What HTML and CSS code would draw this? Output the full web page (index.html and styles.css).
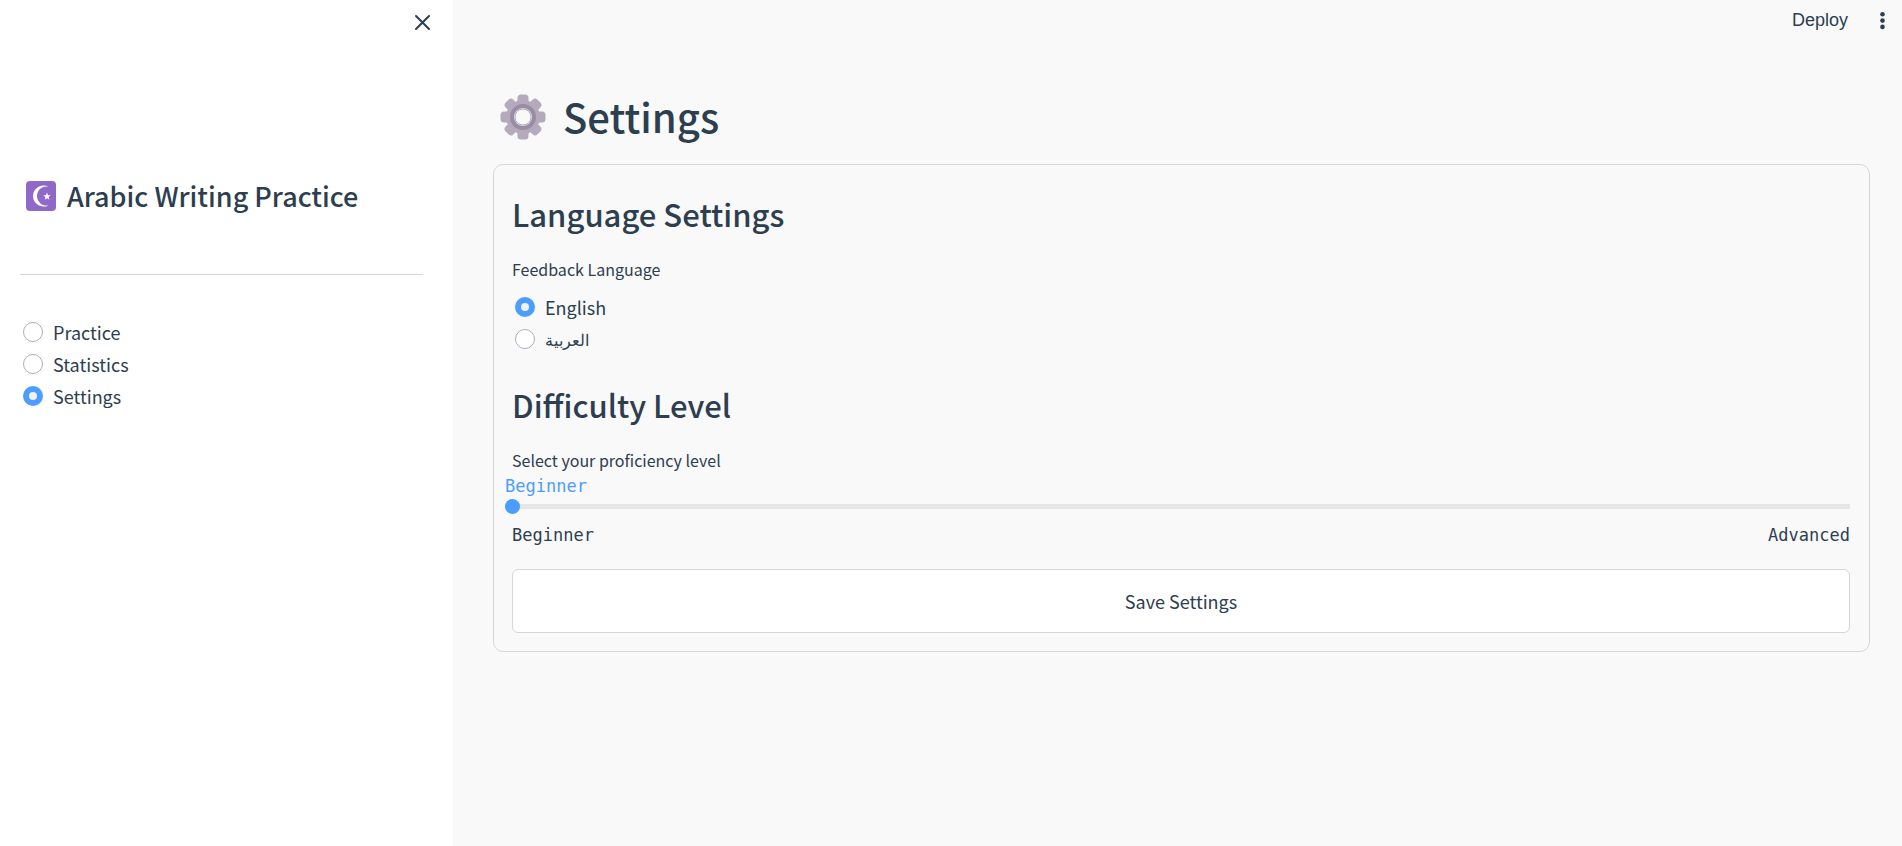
FILE: index.html
```html
<!DOCTYPE html>
<html lang="en">
<head>
<meta charset="utf-8">
<title>Settings</title>
<link rel="stylesheet" href="styles.css">
</head>
<body>
<div class="app">
  <aside class="sidebar">
    <div class="sidebar-top">
      <button class="icon-button" type="button" aria-label="Close sidebar">
        <svg width="24" height="24" viewBox="0 0 24 24" fill="none" stroke="currentColor" stroke-width="2" stroke-linecap="round"><path d="M5 6 18 19M18 6 5 19"/></svg>
      </button>
    </div>
    <h2 class="brand">
      <svg class="brand-icon" viewBox="0 0 30 30" aria-hidden="true">
        <rect width="30" height="30" rx="4" fill="#9068c8"/>
        <path d="M22.500 5.600A10.600 10.600 0 1 0 22.500 24.400A9.600 9.600 0 1 1 22.500 5.600Z" fill="#fff"/>
        <path d="M21 11.500l1 2.700 2.800.1-2.200 1.800.8 2.700-2.400-1.500-2.300 1.500.7-2.700-2.200-1.800 2.800-.1z" fill="#fff"/>
      </svg>
      Arabic Writing Practice
    </h2>
    <hr class="divider">
    <nav class="radio-group">
      <label class="radio"><input type="radio" name="page"><span>Practice</span></label>
      <label class="radio"><input type="radio" name="page"><span>Statistics</span></label>
      <label class="radio"><input type="radio" name="page" checked><span>Settings</span></label>
    </nav>
  </aside>

  <div class="content">
    <header class="toolbar">
      <button class="deploy" type="button">Deploy</button>
      <button class="icon-button" type="button" aria-label="Main menu">
        <svg width="20" height="20" viewBox="0 0 20 20" fill="currentColor"><circle cx="10.500" cy="4.300" r="2.300"/><circle cx="10.500" cy="10.600" r="2.300"/><circle cx="10.500" cy="16.900" r="2.300"/></svg>
      </button>
    </header>
    <main class="main">
      <h1 class="title">
        <svg class="title-icon" viewBox="0 0 46 46" aria-hidden="true">
          <g fill="#b4aabb">
            <circle cx="23" cy="24" r="17"/>
            <rect x="17.500" y="1.500" width="11" height="45" rx="3.500"/>
            <rect x="17.500" y="1.500" width="11" height="45" rx="3.500" transform="rotate(45 23 24)"/>
            <rect x="17.500" y="1.500" width="11" height="45" rx="3.500" transform="rotate(90 23 24)"/>
            <rect x="17.500" y="1.500" width="11" height="45" rx="3.500" transform="rotate(135 23 24)"/>
          </g>
          <circle cx="23" cy="24" r="13" fill="#998da5"/>
          <circle cx="23" cy="24" r="9" fill="#eeebf0"/>
          <circle cx="23" cy="24" r="8" fill="#f9f9f9" stroke="#b4aabb" stroke-width="1"/>
        </svg>
        Settings
      </h1>

      <form class="card">
        <h2 class="section-title">Language Settings</h2>
        <fieldset class="field">
          <legend class="field-label">Feedback Language</legend>
          <div class="radio-group">
            <label class="radio"><input type="radio" name="language" checked><span>English</span></label>
            <label class="radio"><input type="radio" name="language"><span class="arabic" lang="ar">العربية</span></label>
          </div>
        </fieldset>

        <h2 class="section-title">Difficulty Level</h2>
        <div class="field">
          <label class="field-label" for="level">Select your proficiency level</label>
          <output class="level-value" for="level">Beginner</output>
          <input class="slider" id="level" type="range" min="0" max="2" step="1" value="0">
          <div class="scale"><span>Beginner</span><span>Advanced</span></div>
        </div>

        <button class="save" type="button">Save Settings</button>
      </form>
    </main>
  </div>
</div>
</body>
</html>
```
FILE: styles.css
```css
* { box-sizing: border-box; }

body {
  margin: 0;
  background: #f9f9f9;
  color: #2c3e50;
  font: 18px/32px "Noto Sans CJK SC", "Noto Sans", sans-serif;
}

h1, h2 { margin: 0; font-weight: 500; }
button { font: inherit; color: inherit; cursor: pointer; }
svg { display: block; flex: none; overflow: visible; }

.app { display: flex; min-height: 100vh; }

.sidebar { flex: 0 0 453px; padding: 0 30px 40px 20px; background: #fff; }
.sidebar-top { display: flex; justify-content: flex-end; height: 172px; padding-top: 10px; margin-right: -12px; }

.icon-button {
  display: flex;
  align-items: center;
  justify-content: center;
  width: 24px;
  height: 24px;
  padding: 0;
  border: 0;
  background: none;
}

.brand { display: flex; align-items: center; gap: 11px; padding-left: 6px; font-size: 27px; line-height: 48px; }
.brand-icon { width: 30px; height: 30px; }
.divider { height: 1px; margin: 54px 0 41px; border: 0; background: #d5d6de; }

.radio-group { padding-left: 3px; }
.radio { display: flex; align-items: center; gap: 10px; height: 32px; line-height: 30px; cursor: pointer; }
.radio input {
  appearance: none;
  width: 20px;
  height: 20px;
  margin: 0;
  border: 1px solid #aaafb9;
  border-radius: 50%;
  background: #fff;
}
.radio input:checked { border: 6px solid #4b9dff; background: #f0f2f6; }
.arabic { font-size: 16px; }

.content { flex: 1; min-width: 0; }
.toolbar { display: flex; align-items: center; justify-content: flex-end; gap: 22px; height: 40px; padding-right: 8px; }
.deploy { padding: 0; border: 0; background: none; font: 18px/24px "Liberation Sans", Arial, sans-serif; }

.main { padding: 40px 32px 40px 40px; }
.title { display: flex; align-items: center; gap: 17px; padding: 0 0 12px 7px; font-size: 40px; line-height: 72px; }
.title-icon { width: 46px; height: 46px; }

.card { padding: 16px 19px 18px 18px; border: 1px solid #d5d6de; border-radius: 10px; }
.section-title { font-size: 31px; line-height: 66px; }
.field { min-width: 0; margin: 8px 0 0; padding: 0; border: 0; }
.field-label { display: block; padding: 0; font-size: 16px; line-height: 28px; }
.field .radio-group { padding-top: 8px; margin-bottom: 17px; }

.level-value, .scale { font-family: "DejaVu Sans Mono", monospace; font-size: 17px; line-height: 24px; }
.level-value { display: block; margin-left: -7px; color: #4b9dff; }

.slider {
  appearance: none;
  display: block;
  width: calc(100% + 14px);
  height: 16px;
  margin: 0 -7px;
  background: linear-gradient(#e6e6e6, #e6e6e6) center / calc(100% - 14px) 5px no-repeat;
}
.slider::-webkit-slider-thumb {
  appearance: none;
  width: 15px;
  height: 15px;
  border-radius: 50%;
  background: #4b9dff;
}
.scale { display: flex; justify-content: space-between; padding-top: 9px; }

.save {
  width: 100%;
  height: 64px;
  margin-top: 22px;
  border: 1px solid #d5d6de;
  border-radius: 6px;
  background: #fff;
}
```
